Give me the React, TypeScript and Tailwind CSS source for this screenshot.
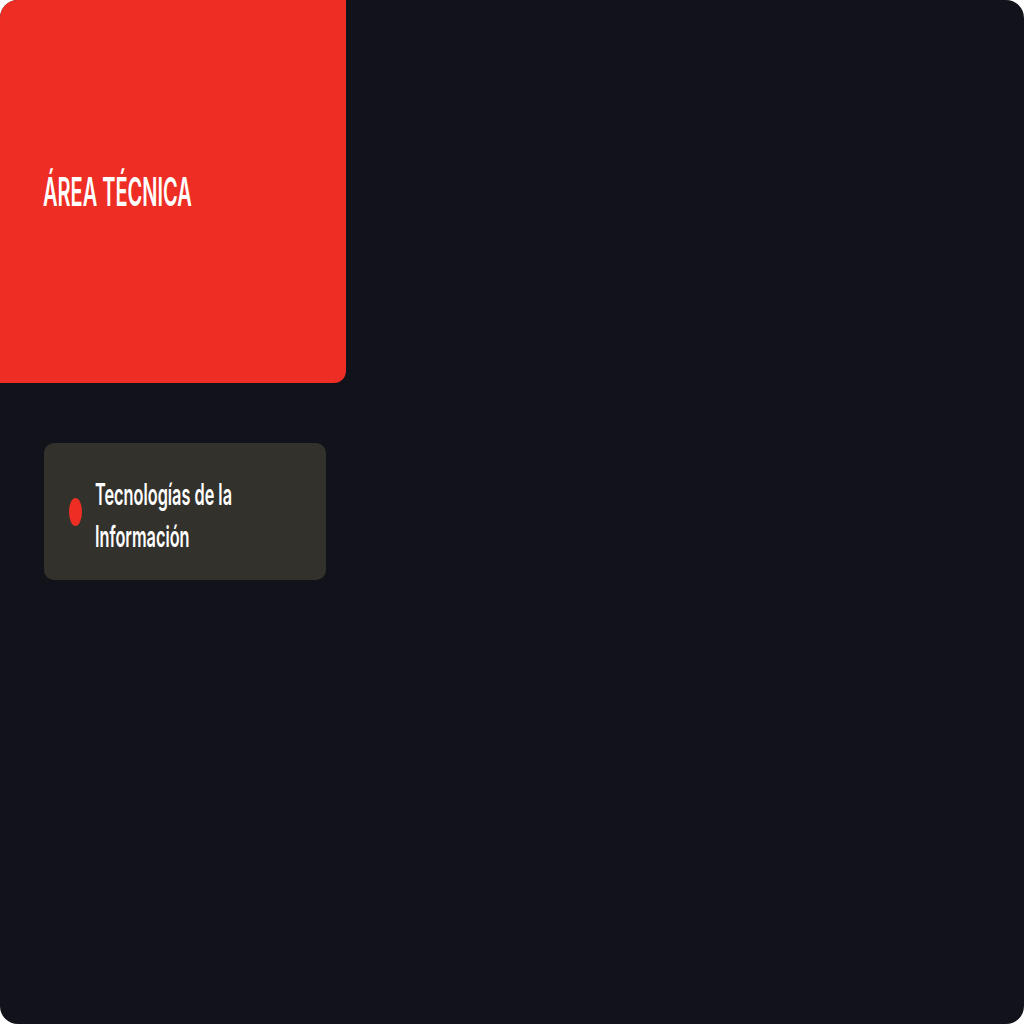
export default function App() {
  return (
    <div className="w-[1024px] h-[1024px] bg-white" style={{ fontFamily: "Inter, 'Noto Sans', sans-serif" }}>
      <div className="h-full w-full rounded-[18px] bg-[#12131a] overflow-hidden">
        {/* Header panel */}
        <div className="w-[346px] h-[383px] bg-[#ee2e24] rounded-br-[12px] rounded-tl-[6px] flex items-center pl-[43px]">
          <h1 className="inline-block text-white font-semibold text-[20px] leading-none scale-y-[1.95] tracking-[0px]">
            ÁREA TÉCNICA
          </h1>
        </div>

        {/* Item card */}
        <div className="mt-[60px] ml-[44px] w-[282px] h-[137px] rounded-[10px] bg-[#33312c] flex items-center">
          <span className="ml-[25px] w-[13px] h-[28px] rounded-[50%] bg-[#ee2e24] shrink-0" />
          <p className="ml-[13px] text-white font-semibold text-[16.3px] leading-[23px] scale-y-[1.82] tracking-[0px] translate-y-[4px]">
            Tecnologías de la
            <br />
            Información
          </p>
        </div>
      </div>
    </div>
  )
}
